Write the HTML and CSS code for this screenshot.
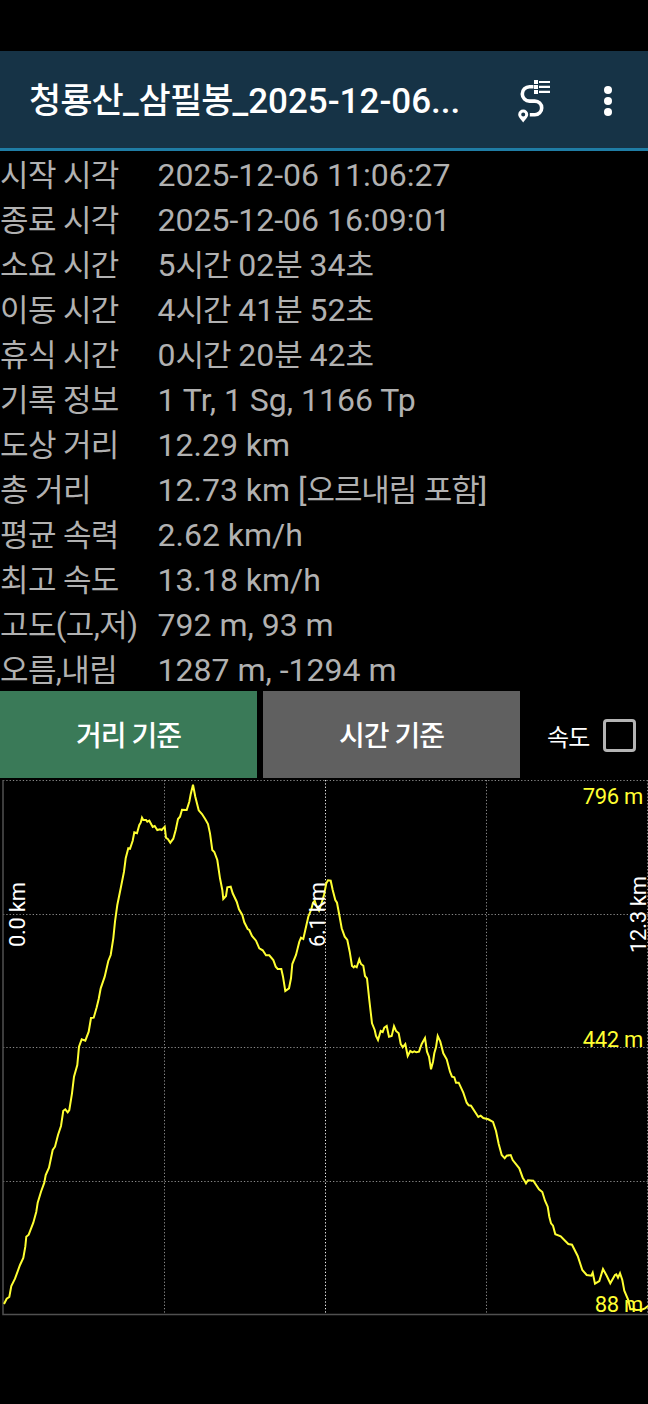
FILE: index.html
```html
<!DOCTYPE html>
<html lang="ko">
<head>
  <meta charset="UTF-8">
  <title>트랙 정보</title>
  <link rel="stylesheet" href="styles.css">
</head>
<body>

  <header class="app-bar">
    <h1><span class="ko">청룡산</span>_<span class="ko">삼필봉</span>_2025-12-06...</h1>
    <svg class="route-icon" viewBox="0 0 36 45" width="36" height="45">
      <path d="M16.500 8.700H12.500a7.200 7.200 0 0 0 0 14.400H17.900a6.800 6.800 0 0 1 0 13.600H12.800" fill="none" stroke="#fff" stroke-width="3.600"/>
      <path d="M22 4h11M22 8.900h11M22 13.900h11" stroke="#fff" stroke-width="2.200"/>
      <path d="M17 4h4M17 8.900h4M17 13.900h4" stroke="#fff" stroke-width="4"/>
      <path fill-rule="evenodd" d="M6.200 31.500a5 5 0 0 0-5 4.900c0 3 3.200 5 5 8.200 1.800-3.200 5-5.200 5-8.200a5 5 0 0 0-5-4.900zm0 3a2 2 0 1 1 0 4 2 2 0 0 1 0-4z" fill="#fff"/>
    </svg>
    <svg class="menu-icon" viewBox="0 0 10 32" width="10" height="32">
      <g fill="#fff"><circle cx="5" cy="5" r="4"/><circle cx="5" cy="16" r="4"/><circle cx="5" cy="27" r="4"/></g>
    </svg>
  </header>

  <dl class="info">
    <dt>시작 시각</dt><dd>2025-12-06 11:06:27</dd>
    <dt>종료 시각</dt><dd>2025-12-06 16:09:01</dd>
    <dt>소요 시간</dt><dd>5<span class="ko">시간</span> 02<span class="ko">분</span> 34<span class="ko">초</span></dd>
    <dt>이동 시간</dt><dd>4<span class="ko">시간</span> 41<span class="ko">분</span> 52<span class="ko">초</span></dd>
    <dt>휴식 시간</dt><dd>0<span class="ko">시간</span> 20<span class="ko">분</span> 42<span class="ko">초</span></dd>
    <dt>기록 정보</dt><dd>1 Tr, 1 Sg, 1166 Tp</dd>
    <dt>도상 거리</dt><dd>12.29 km</dd>
    <dt>총 거리</dt><dd>12.73 km [<span class="ko">오르내림 포함</span>]</dd>
    <dt>평균 속력</dt><dd>2.62 km/h</dd>
    <dt>최고 속도</dt><dd>13.18 km/h</dd>
    <dt>고도(고,저)</dt><dd>792 m, 93 m</dd>
    <dt>오름,내림</dt><dd>1287 m, -1294 m</dd>
  </dl>

  <div class="controls">
    <button class="tab active">거리 기준</button>
    <button class="tab">시간 기준</button>
    <label class="speed">속도 <span class="box"></span></label>
  </div>

  <svg class="chart" viewBox="0 777 648 540" width="648" height="540">
    <g class="grid">
      <path d="M3 780.500H648M3 914.500H648M3 1047.500H648M3 1181.500H648"/>
      <path d="M164.500 780V1314M486.500 780V1314M647.500 780V1314"/>
      <path class="middle" d="M325.500 780V1314"/>
    </g>
    <path class="axis" d="M3 780V1314.500H648"/>
    <polyline class="track" points="
      4,1304 6.700,1298.700 9.300,1297 11.300,1286 15,1278.700 20,1265 23.300,1258 25.300,1246.700 26.300,1236.700 28.700,1234.700
      33.300,1222.700 36.300,1211.700 37.700,1202.700 41,1191.700 44.300,1182.700 45.700,1175 49,1167.700 52.700,1150 55,1146.700 58,1135
      61,1126 63.300,1110.700 65.300,1109.300 67.700,1112.300 69.300,1110 72,1093.300 74,1076.700 77.300,1065 79,1046.700 81.700,1039.300
      85.300,1040.700 88.700,1031.700 91,1018 93.700,1017.700 96.700,1007.300 98.700,999 100.700,988.300 104.700,976.700 108.300,961 110.700,955
      113.300,938.300 115,921.700 117.300,905 120.700,888.300 124,871.700 125.700,858.300 128.300,848.300 130,848.700 132.700,840.700 134.300,832.300
      137,833.300 139.300,825 140.700,822.700 142,817.700 143.300,820 146,820 147.300,821.700 149.300,820.700 152.700,827 154.700,826
      157.300,830 160,829.300 161.700,830 164.700,826.700 166,837.700 168,839.300 170.300,842.700 173.300,838.700 175.700,830 178,819
      180,816.700 182,809.700 186.700,810 189.300,801.700 190.700,794.300 193,784.700 195.300,796.700 198.700,810.300 202,814 205.300,819.300
      208,824 210,833.300 212.300,850 214.300,852 217.300,860 220,878.300 222.300,890 223.300,899 226,896 227.300,887.300
      230.700,886.700 232.700,893.300 236.700,901.700 239,909.300 242.300,915 244.300,922.300 247.700,929 249.300,930 252,936 256,940.700
      259.300,948.300 262.700,950.300 266,955.300 269.300,955.300 273.300,960 275.700,966.700 277.700,969 281.300,969 283,976.700 285.300,991
      289,988.300 291,978.300 292.300,964 296,955 299.300,941.700 301,937.700 303.300,939 305.300,930 308.300,916.700 311.300,909.300
      313,902.700 314.700,900.700 316.700,906.700 319,910.700 321,905 324,895 326.300,883.300 328,880.300 330.700,880.700 332.700,890
      335.300,900 337,902.700 339.300,915 341.700,928.300 344.700,936.700 347.300,940 349.700,951.700 352,966 353.700,967.300 354.700,966
      356.700,967.300 359.300,959.300 361,964 363.300,965.700 365,976 367,978.300 369.300,1000 372,1023.300 374.700,1030 376,1036
      378,1040 380.700,1031 382.700,1032 384.300,1027.700 386.700,1026 389,1036.700 391.700,1036 394,1026.300 396,1031 398.700,1033.300
      400.700,1044 402.700,1047.300 405.300,1044 407.700,1056 410.300,1051 412.300,1052.300 414.300,1051.300 416.300,1052.300 419,1051.700 421.700,1044
      425,1038 427,1051.700 429,1056.700 431,1069.300 433,1061.700 434.300,1053.300 436,1047.300 437.700,1036 440.300,1041.700 443.300,1053.300
      446.700,1059.300 450,1071.700 452,1076.700 454.300,1077.300 456,1082.700 458.700,1082.700 463.300,1092.700 466.700,1102.700 468.700,1105.300 471,1105.700
      478.300,1117 480.700,1115.700 483.300,1118 488.300,1119.300 493,1122 496,1131 498.700,1144 501.700,1155 504.700,1158.300 506.700,1155.700
      510.700,1155 512.700,1160 519.300,1168.300 522.700,1177.700 524.700,1181 526,1183.300 528,1180.300 533.300,1180.700 539,1189.300 542.300,1192
      545,1200.700 547.700,1206.700 549.300,1216.700 551,1223.300 553,1225.700 555.300,1234.300 560.700,1236.300 568.300,1244 572,1244.700 577.700,1256
      582.300,1270 586.700,1275 591.300,1275.700 592.700,1272.700 595,1283.700 599.300,1281 603,1269 606.700,1275.700 610.300,1283.300 615,1275
      616.300,1274.300 618,1277.700 620,1273.300 622.300,1280 624.300,1290.700 628.300,1300 630.300,1309.300 634,1309 636,1310 641.700,1309.700
      645,1308.300 648,1306"/>
    <g class="altitude">
      <text x="643" y="804">796 m</text>
      <text x="643" y="1046.500">442 m</text>
      <text x="643" y="1312">88 m</text>
    </g>
    <g class="distance">
      <text transform="translate(24.500 947) rotate(-90)">0.0 km</text>
      <text transform="translate(324.500 947) rotate(-90)">6.1 km</text>
      <text transform="translate(646 953) rotate(-90)">12.3 km</text>
    </g>
  </svg>

</body>
</html>
```
FILE: styles.css
```css
body {
  margin: 0;
  padding-top: 51px;
  background: #000;
  color: #b1b1b1;
  font-family: Roboto, "Noto Sans CJK KR", sans-serif;
  overflow: hidden;
}

.app-bar {
  display: flex;
  align-items: center;
  height: 97px;
  padding: 0 35px 0 29px;
  background: #163346;
  border-bottom: 3px solid #1f7da5;
  color: #fff;
}

.app-bar h1 {
  flex: 1;
  margin: 0;
  padding-top: 5px;
  font-size: 35px;
  font-weight: 500;
  line-height: 50px;
  white-space: nowrap;
}

.app-bar .ko {
  letter-spacing: -0.9px;
}

.route-icon {
  margin: 2px 50px 0 0;
}

.menu-icon {
  margin-top: 3px;
}

.info {
  display: grid;
  grid-template-columns: 157.5px 1fr;
  grid-auto-rows: 45px;
  margin: 0;
  font-size: 32px;
  line-height: 48px;
  white-space: nowrap;
}

.info dt {
  font-size: 31px;
  line-height: 50px;
  letter-spacing: -0.6px;
}

.info dd {
  margin: 0;
}

.info .ko {
  font-size: 31px;
  letter-spacing: -1.1px;
  word-spacing: 1px;
}

.controls {
  display: flex;
  gap: 6px;
  height: 86px;
}

.tab {
  width: 257px;
  height: 87px;
  padding: 0 0 2px;
  border: 0;
  background: #606060;
  color: #fff;
  font-family: inherit;
  font-size: 28px;
  font-weight: 500;
  letter-spacing: -1px;
}

.tab.active {
  background: #3a7a58;
}

.speed {
  display: flex;
  align-items: center;
  gap: 13px;
  margin-left: 21px;
  padding-top: 3px;
  color: #fff;
  font-size: 24px;
  letter-spacing: -0.8px;
}

.box {
  box-sizing: border-box;
  width: 33px;
  height: 33px;
  border: 3px solid #b4b4b4;
  border-radius: 4px;
}

.chart {
  display: block;
}

.grid path {
  fill: none;
  stroke: #888;
  stroke-dasharray: 1.3 2;
}

.grid .middle {
  stroke: #eee;
}

.axis {
  fill: none;
  stroke: #505050;
  stroke-width: 1.5;
}

.track {
  fill: none;
  stroke: #ffff32;
  stroke-width: 2;
}

.altitude,
.distance {
  font-size: 22px;
  letter-spacing: -0.3px;
}

.altitude {
  fill: #ffff32;
  text-anchor: end;
}

.distance {
  fill: #fff;
}
```
